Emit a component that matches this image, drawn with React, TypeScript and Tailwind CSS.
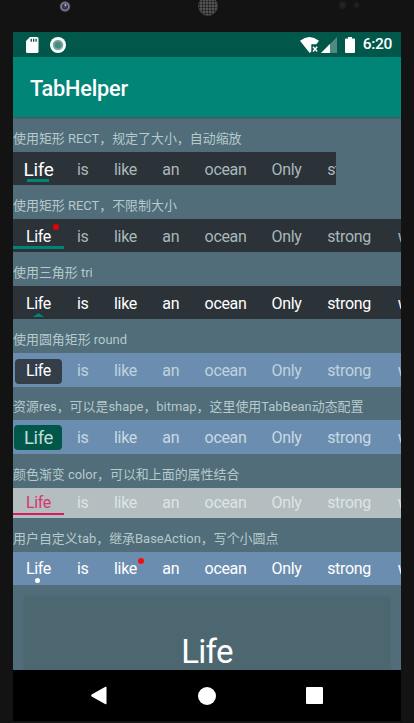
import type { ReactNode } from "react";

const words = [
  { text: "is", width: "w-[37.5px]" },
  { text: "like", width: "w-[48px]" },
  { text: "an", width: "w-[42.5px]" },
  { text: "ocean", width: "w-[67px]" },
  { text: "Only", width: "w-[55px]" },
  { text: "strong", width: "w-[70px]" },
  { text: "with", width: "w-[56px]" },
];

function Label({ children, className = "h-[34px]" }: { children: ReactNode; className?: string }) {
  return (
    <div className={`flex shrink-0 items-end whitespace-nowrap pb-[3.500px] text-[12.95px] leading-[20px] text-[#b6c9cc] ${className}`}>
      {children}
    </div>
  );
}

interface TabsProps {
  bar: string;
  text: string;
  active?: string;
  indicator?: ReactNode;
  likeBadge?: boolean;
}

function Tabs({ bar, text, active = "text-white", indicator, likeBadge }: TabsProps) {
  return (
    <div className={`flex shrink-0 overflow-hidden text-[16px] leading-[20px] tracking-[-0.35px] ${bar}`}>
      <div className={`relative flex h-full w-[51px] shrink-0 items-center justify-center ${active}`}>
        {indicator}
        <span className="relative">Life</span>
      </div>
      {words.map((word) => (
        <div key={word.text} className={`relative flex h-full shrink-0 items-center justify-center ${word.width} ${text}`}>
          {word.text}
          {likeBadge && word.text === "like" && (
            <i className="absolute right-[5.500px] top-[5px] size-[6px] rounded-full bg-[#f30d12]" />
          )}
        </div>
      ))}
    </div>
  );
}

function StatusBar() {
  return (
    <div className="flex h-[25px] shrink-0 items-center bg-[#00574a] text-white">
      <svg className="ml-[12px] h-[18px] w-[14px]" viewBox="0 0 14 18">
        <path d="M5 1h7q1.500 0 1.500 1.500v13q0 1.500-1.500 1.500H2.500Q1 17 1 15.500V5z" fill="#fff" />
        <path d="M5.600 2.700h1.300v3H5.600zm2.400 0h1.300v3H8zm2.400 0h1.300v3h-1.300z" fill="#00574a" />
      </svg>
      <svg className="ml-[10px] h-[18px] w-[18px]" viewBox="0 0 18 18">
        <circle cx="9" cy="9" r="8" fill="#fff" />
        <circle cx="9" cy="9" r="5.300" fill="#76aaa0" />
        <circle cx="9" cy="9" r="3.300" fill="#488a7d" />
      </svg>
      <div className="ml-auto flex items-center">
        <svg className="h-[18px] w-[56px]" viewBox="0 0 56 18">
          <path d="M0 4.700Q9.500-2.500 19 4.700L16.400 8.300H11.300V15.600L9.700 17z" fill="#fff" />
          <path d="m13 10.800 4.200 4.700m0-4.700L13 15.500" stroke="#fff" strokeWidth="1.500" />
          <path d="M37 1v16H21z" fill="#4d8b81" />
          <path d="M30 8v9h-9z" fill="#fff" />
          <path d="M48 1h4v1.500h2q1 0 1 1V16q0 1-1 1h-8q-1 0-1-1V3.500q0-1 1-1h2z" fill="#fff" />
        </svg>
        <span className="ml-[7px] mr-[9px] pt-[1px] text-[15.500px] font-medium leading-none tracking-[-0.3px]">6:20</span>
      </div>
    </div>
  );
}

export default function App() {
  return (
    <div className="relative h-[723px] w-[414px] overflow-hidden bg-[#131313] px-[13px] pt-[32px] font-['Roboto','Noto_Sans_CJK_SC',sans-serif]">
      <svg className="absolute left-0 top-0 h-[32px] w-[414px]" viewBox="0 0 414 32">
        <defs>
          <pattern id="mesh" width="3" height="3" patternUnits="userSpaceOnUse">
            <rect width="3" height="3" fill="#555" />
            <circle cx="1.500" cy="1.500" r="1" fill="#151515" />
          </pattern>
          <radialGradient id="lens">
            <stop offset="0" stopColor="#55518d" />
            <stop offset=".45" stopColor="#292550" />
            <stop offset=".65" stopColor="#8b8b90" />
            <stop offset="1" stopColor="#303033" />
          </radialGradient>
        </defs>
        <circle cx="65" cy="6.500" r="5.500" fill="url(#lens)" />
        <circle cx="65.500" cy="5" r="1" fill="#c0c0ce" />
        <circle cx="208" cy="6" r="9.500" fill="url(#mesh)" stroke="#444" strokeWidth=".7" />
        <circle cx="342.500" cy="5" r="4" fill="#1e1e1e" />
        <circle cx="342.500" cy="5" r="1.500" fill="#292929" />
        <circle cx="356.500" cy="5" r="2.500" fill="#202020" />
      </svg>

      <div className="flex h-[689px] w-[388px] flex-col overflow-hidden">
        <StatusBar />
        <header className="relative z-10 flex h-[60px] shrink-0 items-center bg-[#008577] pl-[17px] pt-[3px] text-[21.700px] font-medium leading-none tracking-[-0.2px] text-white shadow-[0_1px_2px_#36545b]">
          TabHelper
        </header>

        <main className="flex h-[553px] shrink-0 flex-col overflow-hidden bg-[#506d79]">
          <Label className="h-[35px]">使用矩形 RECT，规定了大小，自动缩放</Label>
          <Tabs
            bar="h-[33px] w-[323px] bg-[#2b3238] pt-[2px]"
            text="text-[#a9b8ba]"
            active="text-white text-[19px]"
            indicator={<i className="absolute left-[14px] top-[25px] h-[3px] w-[22px] bg-[#008577]" />}
          />
          <Label>使用矩形 RECT，不限制大小</Label>
          <Tabs
            bar="h-[33px] bg-[#2b3238] pt-[2px]"
            text="text-[#a9b8ba]"
            indicator={
              <>
                <i className="absolute left-0 top-[24.500px] h-[3px] w-[51px] bg-[#008577]" />
                <i className="absolute left-[39.500px] top-[3px] size-[6px] rounded-full bg-[#e30206]" />
              </>
            }
          />
          <Label>使用三角形 tri</Label>
          <Tabs
            bar="h-[33px] bg-[#2b3238] pt-[2px]"
            text="text-white"
            indicator={
              <svg className="absolute left-[20px] top-[25px] h-[4px] w-[11px]" viewBox="0 0 11 4">
                <path d="M0 4 5.500 0 11 4z" fill="#008577" />
              </svg>
            }
          />
          <Label>使用圆角矩形 round</Label>
          <Tabs
            bar="h-[34px] bg-[#6b8eb0] pt-[2px]"
            text="text-[#c0d2de]"
            indicator={<i className="absolute left-[2px] top-[3.500px] h-[25px] w-[46.500px] rounded-[4px] bg-[#333e49]" />}
          />
          <Label className="h-[33px]">资源res，可以是shape，bitmap，这里使用TabBean动态配置</Label>
          <Tabs
            bar="h-[34px] bg-[#6b8eb0] pt-[2px]"
            text="text-[#c8d9e3]"
            active="text-[#c2ddd8] text-[18.500px]"
            indicator={<i className="absolute left-[1px] top-[2.500px] h-[25px] w-[48px] rounded-[4px] bg-[#00574a]" />}
          />
          <Label>颜色渐变 color，可以和上面的属性结合</Label>
          <Tabs
            bar="h-[30px] bg-[#b4bdbf]"
            text="text-[#dce5e6]"
            active="text-[#d9366d]"
            indicator={<i className="absolute left-0 top-[25px] h-[2px] w-[51px] bg-[#d81b60]" />}
          />
          <Label>用户自定义tab，继承BaseAction，写个小圆点</Label>
          <Tabs
            bar="h-[33px] bg-[#6b8eb0] pt-[1px]"
            text="text-white"
            likeBadge
            indicator={<i className="absolute left-[22px] top-[25px] size-[5px] rounded-full bg-white" />}
          />
          <section className="mx-[11px] mt-[12px] flex h-[109px] shrink-0 items-center justify-center bg-[#4c6770] text-[33px] leading-none tracking-[-0.7px] text-white shadow-[0_0_2px_#49666e]">
            Life
          </section>
        </main>

        <nav className="flex h-[51px] shrink-0 items-center bg-black">
          <svg className="ml-[77px] size-[19px]" viewBox="0 0 19 19">
            <path d="M1.600 8.500 15.500.8q1-.5 1 .6v16.200q0 1.100-1 .6L1.600 10.500q-1-.9 0-2z" fill="#fff" />
          </svg>
          <i className="ml-[88.500px] size-[18px] rounded-full bg-white" />
          <i className="ml-[90.500px] size-[17px] rounded-[1px] bg-white" />
        </nav>
      </div>
    </div>
  );
}
